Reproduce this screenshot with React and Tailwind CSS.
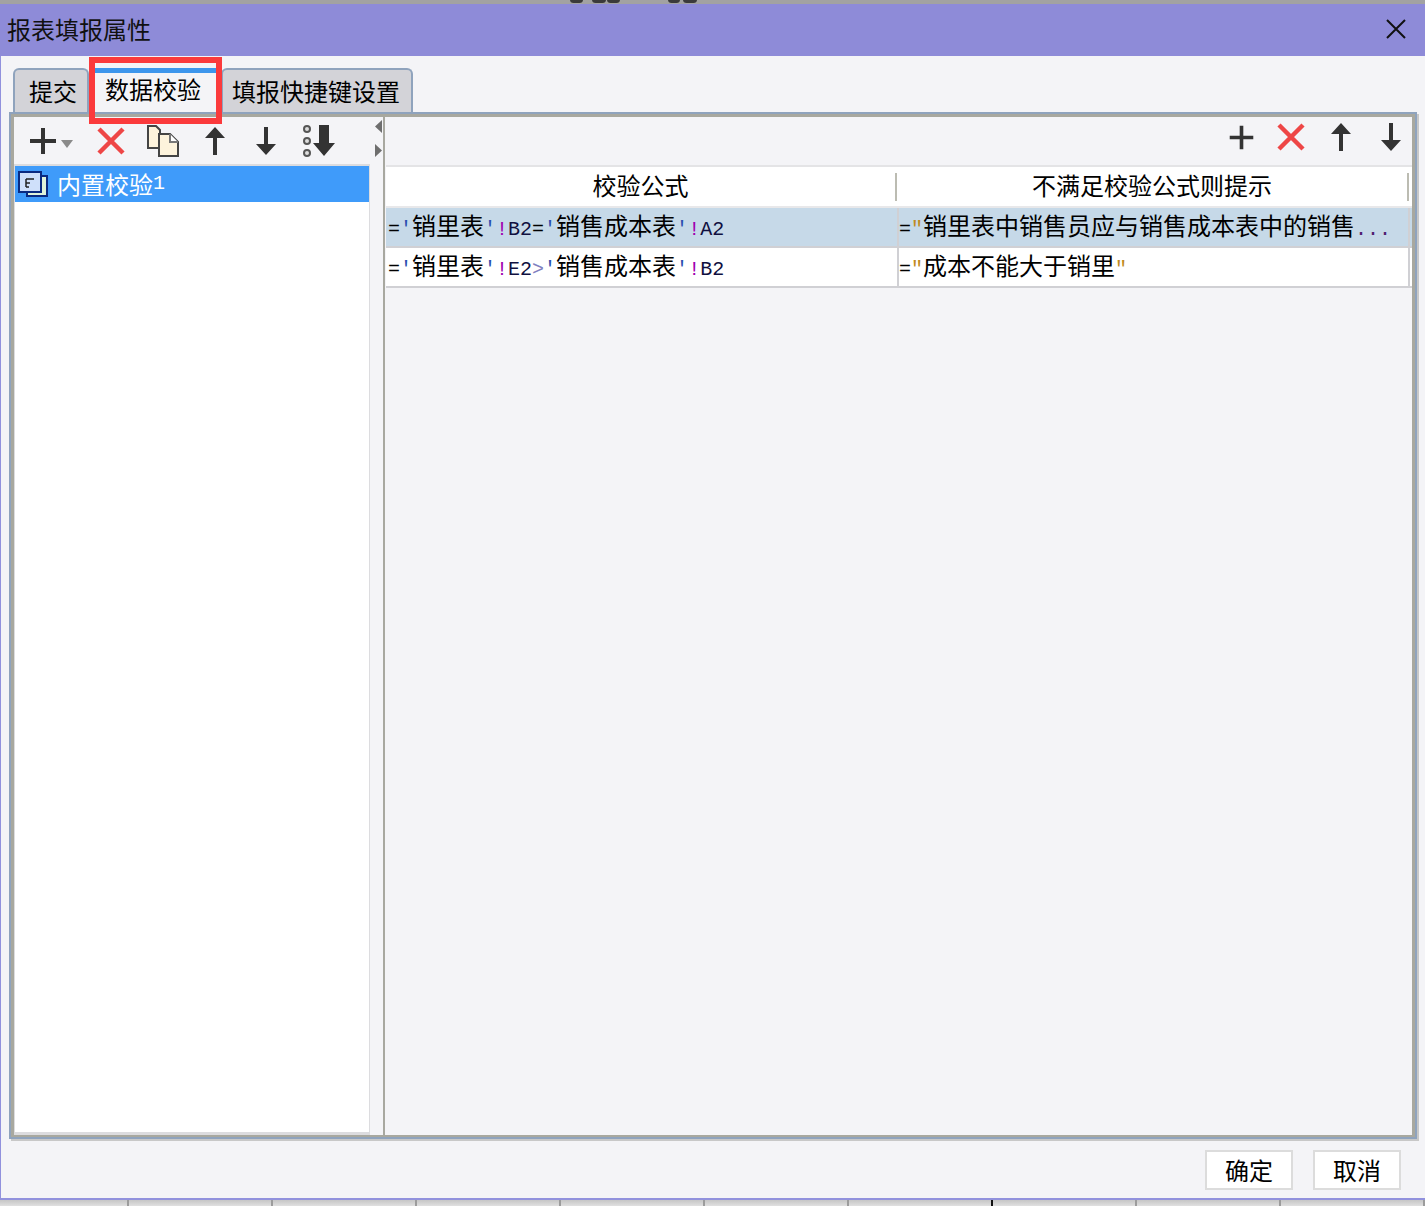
const CJK = '"Noto Sans CJK SC", sans-serif';

function Plus({ size = 32, w = 4 }) {
  return (
    <svg width={size} height={size} viewBox="0 0 32 32" className="block shrink-0">
      <path d="M3 16H29M16 3V29" stroke="#333" strokeWidth={w} fill="none" />
    </svg>
  );
}
function Cross({ size = 32 }) {
  return (
    <svg width={size} height={size} viewBox="0 0 32 32" className="block shrink-0">
      <path d="M4 4L28 28M28 4L4 28" stroke="#ee4646" strokeWidth="4.5" fill="none" />
    </svg>
  );
}
function Up() {
  return (
    <svg width="32" height="32" viewBox="0 0 32 32" className="block shrink-0">
      <path d="M16 2L26 13H18V30H14V13H6Z" fill="#333" />
    </svg>
  );
}
function Down() {
  return (
    <svg width="32" height="32" viewBox="0 0 32 32" className="block shrink-0">
      <path d="M16 30L26 19H18V2H14V19H6Z" fill="#333" />
    </svg>
  );
}
function Copy() {
  return (
    <svg width="34" height="34" viewBox="0 0 34 34" className="block shrink-0">
      <path d="M2 2H10L14 6V10H13V24H2Z" fill="#fdf3dc" stroke="#444" strokeWidth="2" />
      <path d="M13 10H24L32 18V32H13Z" fill="#fdf3dc" stroke="#444" strokeWidth="2" />
      <path d="M24 10V18H32" fill="#fff" stroke="#777" strokeWidth="2" />
    </svg>
  );
}
function MoveDown() {
  return (
    <svg width="34" height="34" viewBox="0 0 34 34" className="block shrink-0">
      <circle cx="5" cy="5" r="3" fill="#ddd" stroke="#555" strokeWidth="2" />
      <circle cx="5" cy="17" r="3" fill="#ddd" stroke="#555" strokeWidth="2" />
      <circle cx="5" cy="29" r="3" fill="#ddd" stroke="#555" strokeWidth="2" />
      <path d="M17 1H27V19H33L22 32L11 19H17Z" fill="#333" />
    </svg>
  );
}
function NodeIcon() {
  return (
    <svg width="30" height="26" viewBox="0 0 30 26" className="block shrink-0">
      <rect x="9" y="5" width="20" height="20" fill="#dff3da" stroke="#0a2a80" strokeWidth="2" />
      <rect x="1" y="1" width="22" height="20" fill="#cfe0fa" stroke="#0a2a80" strokeWidth="2" />
      <path d="M8 8H16M8 8V16M8 12H12M8 16H11" stroke="#222" strokeWidth="1.5" fill="none" />
    </svg>
  );
}

function Han({ children }) {
  return <span className="text-[24px]">{children}</span>;
}
function Mono({ children, color = '#000' }) {
  return (
    <span className="text-[20px] font-['Liberation_Mono',monospace]" style={{ color }}>
      {children}
    </span>
  );
}

function Formula({ parts, first }) {
  return (
    <div className={`${first ? 'pl-[2px]' : 'pl-[0px]'} whitespace-nowrap leading-[34px] text-black overflow-hidden`}>
      {parts.map((p, i) =>
        p.h ? <Han key={i}>{p.h}</Han> : <Mono key={i} color={p.c}>{p.m}</Mono>
      )}
    </div>
  );
}

const Q = { m: "'", c: '#2a4fb0' };
const D = { m: '"', c: '#c08a20' };
const E = { m: '!', c: '#a000b0' };

const rows = [
  {
    sel: true,
    a: [{ m: '=' }, Q, { h: '销里表' }, Q, E, { m: 'B2', c: '#101040' }, { m: '=' }, Q, { h: '销售成本表' }, Q, E, { m: 'A2', c: '#101040' }],
    b: [{ m: '=' }, D, { h: '销里表中销售员应与销售成本表中的销售' }, { m: '...', c: '#502070' }],
  },
  {
    sel: false,
    a: [{ m: '=' }, Q, { h: '销里表' }, Q, E, { m: 'E2', c: '#101040' }, { m: '>', c: '#8080c0' }, Q, { h: '销售成本表' }, Q, E, { m: 'B2', c: '#101040' }],
    b: [{ m: '=' }, D, { h: '成本不能大于销里' }, D],
  },
];

const blobs = [
  { l: 570, w: 13 },
  { l: 592, w: 14 },
  { l: 607, w: 13 },
  { l: 668, w: 12 },
  { l: 683, w: 14 },
];

export default function App() {
  const tick = [127, 271, 415, 559, 703, 847, 991, 1135, 1279, 1423];
  return (
    <div
      className="relative w-[1425px] h-[1206px] overflow-hidden bg-[#dcdcdc] flex flex-col text-black"
      style={{ fontFamily: CJK }}
    >
      {/* strip of the window behind, top */}
      <div className="relative h-[4px] shrink-0 bg-[#a2a2a2] overflow-hidden">
        {blobs.map((b) => (
          <div
            key={b.l}
            className="absolute -top-[4px] h-[7px] rounded-full bg-[#3a3a3a]"
            style={{ left: b.l, width: b.w }}
          />
        ))}
      </div>

      {/* dialog */}
      <div className="relative h-[1196px] shrink-0 flex flex-col bg-[#f4f4f7] border-l-[1px] border-b-[2px] border-[#9191dd]">
        {/* title bar */}
        <div className="-ml-[1px] h-[52px] shrink-0 bg-[#8e8bd8] flex items-center justify-between pl-[7px] pr-[18px] pb-[2px]">
          <span className="text-[24px] leading-none text-[#111]">报表填报属性</span>
          <svg width="22" height="22" viewBox="0 0 22 22" className="block">
            <path d="M2 2L20 20M20 2L2 20" stroke="#111" strokeWidth="2" fill="none" />
          </svg>
        </div>

        {/* tabs */}
        <div className="flex items-end h-[56px] shrink-0 pl-[12px]">
          <div className="w-[76px] h-[44px] rounded-t-[6px] border-2 border-b-0 border-[#8fa3bd] bg-[#d3d3d8] flex items-center justify-center text-[24px] pl-[4px]">
            提交
          </div>
          <div className="ml-[4px] w-[124px] h-[44px] bg-[#f4f4f7] border-t-[5px] border-[#3d96ec] flex items-center justify-center text-[24px] pb-[8px] pr-[4px]">
            数据校验
          </div>
          <div className="ml-[4px] w-[192px] h-[44px] rounded-t-[6px] border-2 border-b-0 border-[#8fa3bd] bg-[#d3d3d8] flex items-center justify-center text-[24px] pr-[2px]">
            填报快捷键设置
          </div>
        </div>

        {/* main panel */}
        <div className="ml-[8px] w-[1408px] h-[1027px] shrink-0 border-[2px] border-[#8fa3bd] shadow-[2px_2px_0_#c8c8c8]">
          <div className="h-full border-[3px] border-b-[2px] border-[#a8a89f] flex">
            {/* left */}
            <div className="w-[356px] shrink-0 flex flex-col">
              <div className="h-[47px] shrink-0 flex items-center pl-[13px]">
                <Plus />
                <svg width="12" height="8" viewBox="0 0 12 8" className="block ml-[2px] mt-[6px] shrink-0">
                  <path d="M0 0H12L6 8Z" fill="#8a8a8a" />
                </svg>
                <div className="ml-[22px]"><Cross /></div>
                <div className="ml-[19px]"><Copy /></div>
                <div className="ml-[19px]"><Up /></div>
                <div className="ml-[19px]"><Down /></div>
                <div className="ml-[20px]"><MoveDown /></div>
              </div>
              <div className="flex-1 bg-white border-t-[2px] border-l-[1px] border-b-[3px] border-r-[1px] border-[#dcdcdf]">
                <div className="h-[36px] bg-[#3f9bfa] flex items-center pl-[3px] text-white">
                  <NodeIcon />
                  <span className="ml-[9px] text-[24px] leading-[36px]">内置校验</span>
                  <span className="text-[20px] font-['Liberation_Mono',monospace] leading-[36px]">1</span>
                </div>
              </div>
            </div>

            {/* splitter */}
            <div className="w-[13px] shrink-0 flex flex-col items-center pt-[3px] gap-[11px] pl-[4px]">
              <svg width="7" height="13" viewBox="0 0 7 13" className="block"><path d="M7 0V13L0 6.5Z" fill="#6e6e6e" /></svg>
              <svg width="7" height="13" viewBox="0 0 7 13" className="block"><path d="M0 0V13L7 6.5Z" fill="#6e6e6e" /></svg>
            </div>

            {/* right */}
            <div className="flex-1 flex flex-col border-l-[2px] border-[#a8a8a0]">
              <div className="h-[48px] shrink-0 flex items-center justify-end gap-[18px] pr-[5px] pb-[8px]">
                <div className="w-[32px] flex justify-center"><Plus size={29} /></div>
                <Cross />
                <Up />
                <Down />
              </div>
              <div className="flex-1 ml-[1px] border-t-[2px] border-[#e4e4e6]">
                <div className="h-[39px] bg-white flex items-center border-b-[2px] border-[#e8e8ea] box-content">
                  <div className="w-[511px] h-[28px] border-r-[2px] border-[#bcbcb2] flex items-center justify-center text-[24px] leading-[24px] pb-[4px]">
                    校验公式
                  </div>
                  <div className="w-[512px] h-[28px] border-r-[2px] border-[#bcbcb2] flex items-center justify-center text-[24px] leading-[24px] pb-[4px]">
                    不满足校验公式则提示
                  </div>
                </div>
                {rows.map((r, i) => (
                  <div
                    key={i}
                    className={`h-[40px] flex border-b-[2px] border-[#d0d0d4] ${r.sel ? 'bg-[#c6d9e8]' : 'bg-white'}`}
                  >
                    <div className="w-[513px] shrink-0 border-r-[2px] border-[#d0d0d4]"><Formula parts={r.a} first /></div>
                    <div className="w-[511px] shrink-0 border-r-[2px] border-[#d0d0d4]"><Formula parts={r.b} /></div>
                  </div>
                ))}
              </div>
            </div>
          </div>
        </div>

        {/* footer */}
        <div className="flex-1 flex items-center justify-end gap-[20px] pr-[24px] pt-[2px]">
          <button className="w-[88px] h-[40px] bg-white border-[2px] border-[#dcdcdc] text-[24px] leading-none">确定</button>
          <button className="w-[88px] h-[40px] bg-white border-[2px] border-[#dcdcdc] text-[24px] leading-none">取消</button>
        </div>

        {/* red annotation */}
        <div className="absolute left-[88px] top-[53px] w-[133px] h-[67px] border-[6px] border-[#fb3a3c]" />
      </div>

      {/* strip of the sheet behind, bottom */}
      <div className="relative flex-1 bg-gradient-to-b from-[#c6c6c6] to-[#e0e0e0]">
        {tick.map((x) => (
          <div
            key={x}
            className={`absolute top-0 bottom-0 w-[2px] ${x === 991 ? 'bg-[#111]' : 'bg-[#9c9c9c]'}`}
            style={{ left: x }}
          />
        ))}
      </div>
    </div>
  );
}
